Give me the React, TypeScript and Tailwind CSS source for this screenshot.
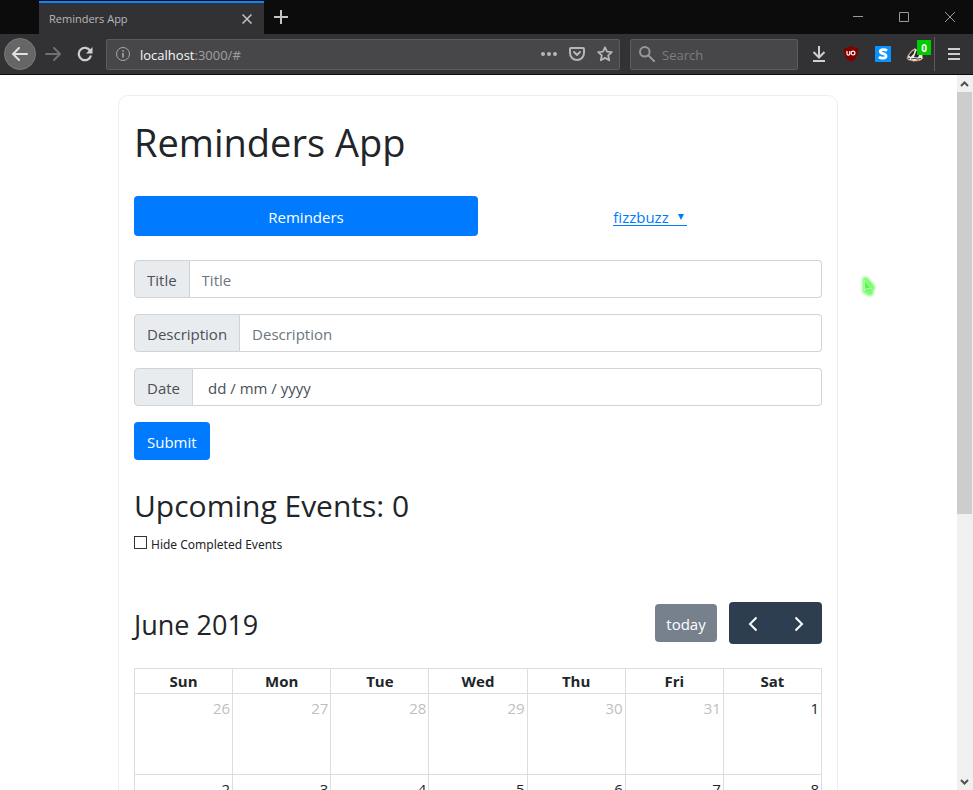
import { useState } from "react";
import type { ReactNode } from "react";

const DAYS = ["Sun", "Mon", "Tue", "Wed", "Thu", "Fri", "Sat"];

const WEEKS = [
  [26, 27, 28, 29, 30, 31, 1],
  [2, 3, 4, 5, 6, 7, 8],
];

function TabStrip() {
  return (
    <div className="flex h-[34px] shrink-0 items-end bg-[#0c0c0c] pl-[39px]">
      <div className="flex h-[33px] w-[225px] items-center justify-between border-t-2 border-[#0a84ff] bg-[#323234] pr-2 pl-[10px]">
        <span className="text-[11px] leading-4 text-[#b8b8ba]">Reminders App</span>
        <button aria-label="Close tab" className="flex size-[18px] items-center justify-center">
          <svg width="10" height="10" viewBox="0 0 10 10" fill="none" stroke="#c4c4c4" strokeWidth="1.5">
            <path d="M.5.5l9 9M9.5.5l-9 9" />
          </svg>
        </button>
      </div>
      <button aria-label="New tab" className="flex size-[34px] items-center justify-center">
        <svg width="14" height="14" viewBox="0 0 14 14" fill="none" stroke="#c4c4c4" strokeWidth="2">
          <path d="M7 0v14M0 7h14" />
        </svg>
      </button>
      <div className="ml-auto flex h-full">
        <button aria-label="Minimize" className="flex w-[46px] items-center justify-center">
          <svg width="10" height="10" viewBox="0 0 10 10" fill="none" stroke="#9a9a9a">
            <path d="M0 4.500h10" />
          </svg>
        </button>
        <button aria-label="Maximize" className="flex w-[46px] items-center justify-center">
          <svg width="10" height="10" viewBox="0 0 10 10" fill="none" stroke="#9a9a9a">
            <path d="M.5.5h9v9h-9z" />
          </svg>
        </button>
        <button aria-label="Close window" className="flex w-[46px] items-center justify-center">
          <svg width="10" height="10" viewBox="0 0 10 10" fill="none" stroke="#9a9a9a">
            <path d="M0 0l10 10M10 0L0 10" />
          </svg>
        </button>
      </div>
    </div>
  );
}

function ToolButton({ label, children }: { label: string; children: ReactNode }) {
  return (
    <button aria-label={label} className="flex size-8 shrink-0 items-center justify-center">
      {children}
    </button>
  );
}

function Toolbar() {
  return (
    <div className="flex h-[41px] shrink-0 items-center border-b border-[#0c0c0c] bg-[#323234] pr-[3px] pl-1">
      <button
        aria-label="Back"
        className="mr-px flex size-8 shrink-0 items-center justify-center rounded-full border border-[#7a7a7b] bg-[#666667]"
      >
        <svg width="16" height="14" viewBox="0 0 16 14" fill="none" stroke="#e0e0e0" strokeWidth="2" strokeLinecap="round" strokeLinejoin="round">
          <path d="M15 7H1.500M7 1L1 7l6 6" />
        </svg>
      </button>
      <ToolButton label="Forward">
        <svg width="16" height="14" viewBox="0 0 16 14" fill="none" stroke="#707072" strokeWidth="2" strokeLinecap="round" strokeLinejoin="round">
          <path d="M1 7h13.500M9 1l6 6-6 6" />
        </svg>
      </ToolButton>
      <ToolButton label="Reload">
        <svg width="16" height="16" viewBox="0 0 16 16" fill="none">
          <path d="M13.200 4.600A6.200 6.200 0 1 0 14 9.500" stroke="#cfcfcf" strokeWidth="2.200" />
          <path d="M15.500 1v6.500H9z" fill="#cfcfcf" />
        </svg>
      </ToolButton>
      <div className="ml-[5px] flex h-[31px] min-w-0 flex-1 items-center rounded-xs border border-[#5b5b5d] bg-[#474749]">
        <svg className="ml-2 shrink-0" width="16" height="16" viewBox="0 0 16 16" fill="none" stroke="#a8a8aa">
          <circle cx="8" cy="8" r="6.500" />
          <path d="M8 7v4.500M8 4.200v1.600" strokeWidth="1.600" />
        </svg>
        <div className="ml-[9px] min-w-0 flex-1 pt-[2px] text-[13px] leading-5 text-[#a0a0a2]">
          <span className="text-[#f9f9fa]">localhost</span>:3000/#
        </div>
        <button aria-label="Page actions" className="flex w-7 justify-center">
          <svg width="16" height="4" viewBox="0 0 16 4" fill="#b6b6b8">
            <circle cx="2" cy="2" r="2" />
            <circle cx="8" cy="2" r="2" />
            <circle cx="14" cy="2" r="2" />
          </svg>
        </button>
        <button aria-label="Save to Pocket" className="flex w-7 justify-center">
          <svg width="16" height="14" viewBox="0 0 16 14" fill="none" stroke="#b6b6b8" strokeWidth="2" strokeLinecap="round" strokeLinejoin="round">
            <path d="M2 1h12a1 1 0 0 1 1 1v4a7 7 0 0 1-14 0V2a1 1 0 0 1 1-1z" />
            <path d="M5 5l3 3 3-3" />
          </svg>
        </button>
        <button aria-label="Bookmark this page" className="flex w-7 justify-center">
          <svg width="16" height="16" viewBox="0 0 16 16" fill="none" stroke="#b6b6b8" strokeWidth="1.800" strokeLinejoin="round">
            <path d="M8 1.300l2 4.400 4.800.5-3.600 3.200 1 4.900L8 11.900l-4.200 2.400 1-4.900L1.200 6.200 6 5.700z" />
          </svg>
        </button>
      </div>
      <div className="ml-[10px] flex h-[31px] w-[168px] items-center rounded-xs border border-[#5b5b5d] bg-[#474749] pl-2">
        <svg className="shrink-0" width="16" height="16" viewBox="0 0 16 16" fill="none" stroke="#98989a" strokeWidth="2">
          <circle cx="5.800" cy="5.800" r="4.800" />
          <path d="M9.400 9.400l6 6" strokeLinecap="round" />
        </svg>
        <input
          aria-label="Search"
          placeholder="Search"
          className="ml-[7px] w-full min-w-0 bg-transparent pt-[2px] text-[13px] leading-5 text-white outline-none placeholder:text-[#7d7d80]"
        />
      </div>
      <div className="w-[5px] shrink-0" />
      <ToolButton label="Downloads">
        <svg width="14" height="16" viewBox="0 0 14 16" fill="none" stroke="#cfcfcf" strokeWidth="2">
          <path d="M7 0v11M1.500 6L7 11.500 12.500 6M1 15h12" />
        </svg>
      </ToolButton>
      <ToolButton label="uBlock Origin">
        <svg width="16" height="16" viewBox="0 0 16 16" fill="none">
          <path d="M8 0c2 1.400 4.500 1.800 7 1.800 0 6.500-.3 10.700-7 14.200C1.300 12.500 1 8.300 1 1.800 3.500 1.800 6 1.400 8 0z" fill="#800000" />
          <path d="M4 5v2.700a1.400 1.400 0 0 0 2.800 0V5" stroke="#fff" strokeWidth="1.200" />
          <circle cx="10" cy="7.100" r="1.900" stroke="#fff" strokeWidth="1.200" />
        </svg>
      </ToolButton>
      <ToolButton label="Stylus">
        <svg width="16" height="16" viewBox="0 0 16 16" fill="none">
          <path d="M0 0h16v16H0z" fill="#0a93ff" />
          <path d="M12 4.800C10.500 3.500 5.300 3 5.300 5.500c0 2.800 5.700 1.600 5.700 4.600 0 2.900-5.300 2.300-7 .8" stroke="#fff" strokeWidth="2.800" />
        </svg>
      </ToolButton>
      <button aria-label="Privacy Badger" className="relative flex size-8 shrink-0 items-center justify-center">
        <svg width="18" height="16" viewBox="0 0 18 16" fill="none">
          <path d="M.8 12.500C2 8.500 5 4.500 9 2.500l7 6 .8 4-3 2-6 .7-5-1.200z" fill="#f3ece6" stroke="#b98262" strokeWidth=".8" />
          <path d="M3 9.500C4.500 7 6.500 5 9 3.800L7.500 8 4.500 11zM8 11l2.500-6.500 3 3.500-1.500 3.500z" fill="#26262a" />
          <path d="M1.500 12l2.500.5M5 13l4-.8 3 1 3-1" stroke="#4a4240" strokeWidth="1.100" />
        </svg>
        <span className="absolute top-[2px] right-0 flex h-[15px] w-[14px] items-center justify-center bg-[#00cc00] text-[10px] leading-3 font-bold text-white">
          0
        </span>
      </button>
      <div className="mx-[3px] h-[34px] w-px bg-[#5b5b5d]" />
      <ToolButton label="Open menu">
        <svg width="12" height="12" viewBox="0 0 12 12" stroke="#cfcfcf" strokeWidth="2">
          <path d="M0 1h12M0 6h12M0 11h12" />
        </svg>
      </ToolButton>
    </div>
  );
}

function Scrollbar() {
  return (
    <div aria-hidden="true" className="ml-px flex w-4 shrink-0 flex-col bg-[#f0f0f0] pr-px">
      <div className="flex h-[17px] items-center justify-center">
        <svg width="9" height="6" viewBox="0 0 9 6" fill="none" stroke="#505050" strokeWidth="2">
          <path d="M1 5l3.500-3.500L8 5" />
        </svg>
      </div>
      <div className="min-h-0 flex-1">
        <div className="h-[62%] bg-[#cdcdcd]" />
      </div>
      <div className="flex h-[17px] items-center justify-center">
        <svg width="9" height="6" viewBox="0 0 9 6" fill="none" stroke="#505050" strokeWidth="2">
          <path d="M1 1l3.500 3.500L8 1" />
        </svg>
      </div>
    </div>
  );
}

function Field({ id, label, inputClass, placeholder }: { id: string; label: string; inputClass: string; placeholder: string }) {
  return (
    <div className="mb-4 flex h-[38px]">
      <label
        htmlFor={id}
        className="flex items-center rounded-l border border-[#ced4da] bg-[#e9ecef] px-3 pt-[2px] text-[15px] leading-6 text-[#495057]"
      >
        {label}
      </label>
      <input
        id={id}
        type="text"
        placeholder={placeholder}
        className={
          "min-w-0 flex-1 rounded-r border border-l-0 border-[#ced4da] bg-white pt-[2px] text-[15px] leading-6 text-[#495057] outline-none " +
          inputClass
        }
      />
    </div>
  );
}

function Calendar() {
  return (
    <section>
      <div className="flex items-center justify-between">
        <h2 className="pt-1 text-[27px] leading-9">June 2019</h2>
        <div className="flex items-center gap-3">
          <button disabled className="h-[38px] w-[62px] rounded bg-[#76818d] pt-[2px] text-[15px] leading-6 text-white">
            today
          </button>
          <div className="flex h-[42px] rounded bg-[#2c3e50] pt-[2px]">
            <button aria-label="Previous month" className="flex w-[47px] items-center justify-center">
              <svg width="10" height="16" viewBox="0 0 10 16" fill="none" stroke="#fff" strokeWidth="2">
                <path d="M8.500 1.500L2 8l6.500 6.500" />
              </svg>
            </button>
            <button aria-label="Next month" className="flex w-[46px] items-center justify-center">
              <svg width="10" height="16" viewBox="0 0 10 16" fill="none" stroke="#fff" strokeWidth="2">
                <path d="M1.500 1.500L8 8l-6.500 6.500" />
              </svg>
            </button>
          </div>
        </div>
      </div>
      <table className="mt-6 w-full table-fixed border-collapse text-[15px] leading-6">
        <thead>
          <tr>
            {DAYS.map((day) => (
              <th key={day} scope="col" className="h-[25px] border border-[#dddddd] p-0 font-bold">
                {day}
              </th>
            ))}
          </tr>
        </thead>
        <tbody>
          {WEEKS.map((week, row) => (
            <tr key={row}>
              {week.map((day) => (
                <td
                  key={day}
                  className={
                    "h-[81px] border border-[#dddddd] px-[2px] pt-[2px] pb-0 text-right align-top " +
                    (row === 0 && day > 7 ? "text-[#bdbfc0]" : "text-[#212529]")
                  }
                >
                  {day}
                </td>
              ))}
            </tr>
          ))}
        </tbody>
      </table>
    </section>
  );
}

export default function App() {
  const [hideCompleted, setHideCompleted] = useState(false);

  return (
    <div className="flex h-screen flex-col overflow-hidden bg-white font-['Open_Sans','Noto_Sans',sans-serif] text-[#212529]">
      <TabStrip />
      <Toolbar />
      <div className="relative flex min-h-0 flex-1">
        <main className="min-w-0 flex-1 overflow-hidden pt-5">
          <div className="mx-auto w-full max-w-[720px] rounded-[10px] border border-[#eeeeee] px-[15px] pt-[22px]">
            <h1 className="text-[38px] leading-12">Reminders App</h1>
            <nav className="mt-[30px] mb-6 flex h-10 items-center">
              <a href="#" className="flex h-full w-1/2 items-center justify-center rounded bg-[#007bff] pt-[2px] text-[15px] leading-6 text-white">
                Reminders
              </a>
              <div className="flex w-1/2 justify-center">
                <a href="#" className="flex items-center border-b border-[#007bff] pt-[2px] text-[15px] leading-4 text-[#007bff]">
                  fizzbuzz
                  <svg aria-hidden="true" className="mr-[3px] ml-[9px]" width="6" height="6" viewBox="0 0 6 6" fill="#007bff">
                    <path d="M0 0h6L3 6z" />
                  </svg>
                </a>
              </div>
            </nav>
            <form onSubmit={(event) => event.preventDefault()}>
              <Field id="title" label="Title" placeholder="Title" inputClass="px-3 placeholder:text-[#6c757d]" />
              <Field id="description" label="Description" placeholder="Description" inputClass="px-3 placeholder:text-[#6c757d]" />
              <Field id="date" label="Date" placeholder="dd / mm / yyyy" inputClass="px-[15px] placeholder:text-[#495057]" />
              <button type="submit" className="h-[38px] rounded bg-[#007bff] px-[13px] pt-[2px] text-[15px] leading-6 text-white">
                Submit
              </button>
            </form>
            <h2 className="mt-[26px] text-[30px] leading-10">Upcoming Events: 0</h2>
            <div className="mt-[9px] mb-[49px] flex h-[18px] items-center">
              <input
                id="hide-completed"
                type="checkbox"
                checked={hideCompleted}
                onChange={(event) => setHideCompleted(event.target.checked)}
                className="mb-[3px] size-[13px] appearance-none border border-[#333333] bg-white checked:bg-[#333333]"
              />
              <label htmlFor="hide-completed" className="ml-1 pt-[2px] font-['Noto_Sans',sans-serif] text-[12px] leading-[18px]">
                Hide Completed Events
              </label>
            </div>
            <Calendar />
          </div>
        </main>
        <Scrollbar />
        <svg
          aria-hidden="true"
          className="absolute top-[198px] left-[858px]"
          width="20"
          height="26"
          viewBox="0 0 20 26"
          fill="none"
        >
          <defs>
            <filter id="glow" x="-30%" y="-30%" width="160%" height="160%">
              <feGaussianBlur stdDeviation="1" />
            </filter>
          </defs>
          <path
            d="M6 5.500h2.500l7 8-.5 3-1.500.5.500 4-3.500.5-2-2.500H6z"
            fill="#6dfa62"
            stroke="#7dfc72"
            strokeWidth="3"
            strokeLinejoin="round"
            filter="url(#glow)"
          />
          <path d="M6.500 7v10.500L9 15.500h4.500z" fill="#5cf650" stroke="#b4ffac" strokeLinejoin="round" />
        </svg>
      </div>
    </div>
  );
}
